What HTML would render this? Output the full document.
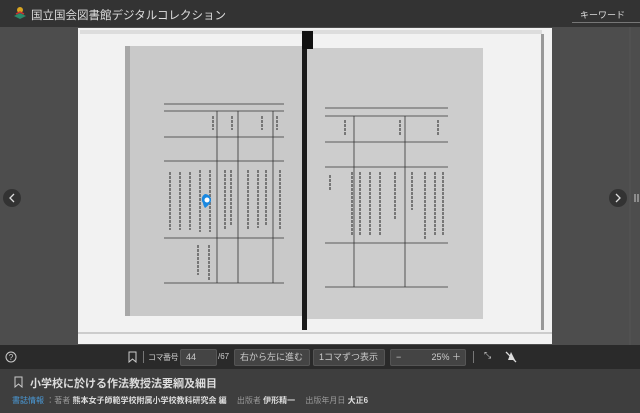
<!DOCTYPE html>
<html><head><meta charset="utf-8"><style>
*{margin:0;padding:0;box-sizing:border-box}
body{width:640px;height:413px;overflow:hidden;background:#3c3c3c;font-family:"Liberation Sans","Noto Sans CJK JP",sans-serif;position:relative}
.abs{position:absolute}
#hdr{left:0;top:0;width:640px;height:27px;background:#333}
#view{left:0;top:27px;width:640px;height:318px;background:#4d4d4d}
#tb{left:0;top:345px;width:640px;height:24px;background:#2a2a2a}
.box{position:absolute;top:4px;height:17px;background:#444;border:1px solid #555;border-radius:2px;color:#ccc;font-size:9px;line-height:15px;padding-left:5px}
.t{color:#ccc;font-size:8px;position:absolute}
</style></head><body>
<div id="hdr" class="abs">
 <svg class="abs" style="left:13px;top:6px" width="14" height="14"><circle cx="7" cy="4" r="3" fill="#d9a520"/><path d="M1 10 L7 7 L13 10 L7 13Z" fill="#2a8a6a"/><path d="M3 8 L7 6 L11 8" stroke="#c33" stroke-width="1.5" fill="none"/></svg>
 <div class="abs" style="left:31px;top:7px;color:#ddd;font-size:11.5px">国立国会図書館デジタルコレクション</div>
 <div class="abs" style="left:580px;top:8px;color:#ddd;font-size:9px">キーワード</div>
 <div class="abs" style="left:572px;top:22px;width:68px;height:1px;background:#777"></div>
</div>
<div id="view" class="abs"></div>
<div class="abs" style="left:78px;top:28px;width:474px;height:316px;background:#f2f2f2"></div>
<div class="abs" style="left:80px;top:30px;width:462px;height:4px;background:#ddd"></div>
<div class="abs" style="left:541px;top:34px;width:3px;height:296px;background:#999"></div>
<div class="abs" style="left:78px;top:332px;width:474px;height:2px;background:#ccc"></div>
<div class="abs" style="left:125px;top:46px;width:182px;height:270px;background:#c9c9c9"></div>
<div class="abs" style="left:125px;top:46px;width:5px;height:270px;background:#a8a8a8"></div>
<div class="abs" style="left:307px;top:48px;width:176px;height:271px;background:#cdcdcd"></div>
<div class="abs" style="left:302px;top:40px;width:5px;height:290px;background:#1a1a1a"></div>
<div class="abs" style="left:302px;top:31px;width:11px;height:18px;background:#111"></div>
<svg class="abs" style="left:0;top:0" width="640" height="413">
 <g stroke="#333" stroke-width="0.8" fill="none">
  <line x1="164" y1="104" x2="284" y2="104"/><line x1="164" y1="111" x2="284" y2="111"/>
  <line x1="164" y1="137" x2="284" y2="137"/><line x1="164" y1="161" x2="284" y2="161"/>
  <line x1="164" y1="238" x2="284" y2="238"/><line x1="164" y1="283" x2="284" y2="283"/>
  <line x1="217" y1="111" x2="217" y2="283"/><line x1="238" y1="111" x2="238" y2="283"/><line x1="273" y1="111" x2="273" y2="283"/>
  <line x1="325" y1="108" x2="448" y2="108"/><line x1="325" y1="116" x2="448" y2="116"/>
  <line x1="325" y1="142" x2="448" y2="142"/><line x1="325" y1="167" x2="448" y2="167"/>
  <line x1="325" y1="243" x2="448" y2="243"/><line x1="325" y1="287" x2="448" y2="287"/>
  <line x1="354" y1="116" x2="354" y2="287"/><line x1="405" y1="116" x2="405" y2="287"/>
 </g>
 <g stroke="#777" stroke-width="2" stroke-dasharray="3 1">
  <line x1="170" y1="172" x2="170" y2="230"/><line x1="180" y1="172" x2="180" y2="230"/><line x1="190" y1="172" x2="190" y2="230"/><line x1="200" y1="170" x2="200" y2="232"/><line x1="210" y1="170" x2="210" y2="232"/>
  <line x1="225" y1="170" x2="225" y2="230"/><line x1="231" y1="170" x2="231" y2="225"/><line x1="248" y1="170" x2="248" y2="230"/><line x1="258" y1="170" x2="258" y2="228"/><line x1="266" y1="170" x2="266" y2="225"/><line x1="280" y1="170" x2="280" y2="230"/>
  <line x1="209" y1="245" x2="209" y2="280"/><line x1="198" y1="245" x2="198" y2="275"/>
  <line x1="330" y1="175" x2="330" y2="190"/><line x1="352" y1="172" x2="352" y2="235"/><line x1="360" y1="172" x2="360" y2="235"/><line x1="370" y1="172" x2="370" y2="235"/><line x1="380" y1="172" x2="380" y2="235"/>
  <line x1="395" y1="172" x2="395" y2="220"/><line x1="412" y1="172" x2="412" y2="210"/><line x1="425" y1="172" x2="425" y2="240"/><line x1="435" y1="172" x2="435" y2="235"/><line x1="443" y1="172" x2="443" y2="235"/>
  <line x1="213" y1="116" x2="213" y2="130"/><line x1="232" y1="116" x2="232" y2="130"/><line x1="262" y1="116" x2="262" y2="130"/><line x1="277" y1="116" x2="277" y2="130"/>
  <line x1="345" y1="120" x2="345" y2="135"/><line x1="400" y1="120" x2="400" y2="135"/><line x1="438" y1="120" x2="438" y2="135"/>
 </g>
 <path d="M205 194a6 6 0 0 1 6 6c0 4-6 8-6 8s-2-3-2-5a6 6 0 0 1 2-9z" fill="#1a88e0"/><circle cx="207" cy="200" r="2.5" fill="#fff"/>
 <circle cx="12" cy="198" r="9" fill="#333"/><path d="M14 194 L10 198 L14 202" stroke="#ddd" stroke-width="1.3" fill="none"/>
 <circle cx="618" cy="198" r="9" fill="#333"/><path d="M616 194 L620 198 L616 202" stroke="#ddd" stroke-width="1.3" fill="none"/>
 <line x1="635" y1="194" x2="635" y2="202" stroke="#ccc"/><line x1="638" y1="194" x2="638" y2="202" stroke="#ccc"/>
 <line x1="630" y1="27" x2="630" y2="345" stroke="#555"/>
</svg>
<div id="tb" class="abs">
 <svg class="abs" style="left:5px;top:6px" width="12" height="12"><circle cx="6" cy="6" r="5" stroke="#ccc" fill="none"/><text x="6" y="9" font-size="8" fill="#ccc" text-anchor="middle">?</text></svg>
 <svg class="abs" style="left:128px;top:6px" width="10" height="12"><path d="M1 1H8V11L4.5 8 1 11Z" stroke="#ccc" fill="none"/></svg>
 <div class="abs" style="left:143px;top:6px;width:1px;height:12px;background:#777"></div>
 <div class="t" style="left:148px;top:7px;letter-spacing:-0.5px">コマ番号</div>
 <div class="box" style="left:180px;width:37px">44</div>
 <div class="t" style="left:218px;top:7px">/67</div>
 <div class="box" style="left:234px;width:76px">右から左に進む <span style="float:right;padding-right:4px">⌵</span></div>
 <div class="box" style="left:313px;width:72px">1コマずつ表示 <span style="float:right;padding-right:4px">⌵</span></div>
 <div class="box" style="left:390px;width:76px">−<span style="float:right;padding-right:4px">25% ＋</span></div>
 <div class="abs" style="left:473px;top:6px;width:1px;height:12px;background:#777"></div>
 <div class="t" style="left:484px;top:5px;font-size:9px">⤡</div>
 <svg class="abs" style="left:505px;top:5px" width="12" height="13"><path d="M3 10 L6 2 L10 10Z" fill="#ddd"/><line x1="1" y1="2" x2="11" y2="12" stroke="#ddd" stroke-width="1.3"/></svg>
</div>
<div class="abs" style="left:0;top:369px;width:640px;height:44px;background:#3e3e3e"></div>
<svg class="abs" style="left:14px;top:376px" width="10" height="12"><path d="M1 1H8V11L4.5 8 1 11Z" stroke="#ccc" fill="none"/></svg>
<div class="abs" style="left:30px;top:375px;color:#ddd;font-size:11px;font-weight:bold">小学校に於ける作法教授法要綱及細目</div>
<div class="abs" style="left:12px;top:395px;font-size:8px;color:#999;white-space:nowrap"><span style="color:#4a9ad8">書誌情報</span> ：著者 <b style="color:#ddd">熊本女子師範学校附属小学校教科研究会 編</b>　 出版者 <b style="color:#ddd">伊形精一</b>　 出版年月日 <b style="color:#ddd">大正6</b></div>
</body></html>
